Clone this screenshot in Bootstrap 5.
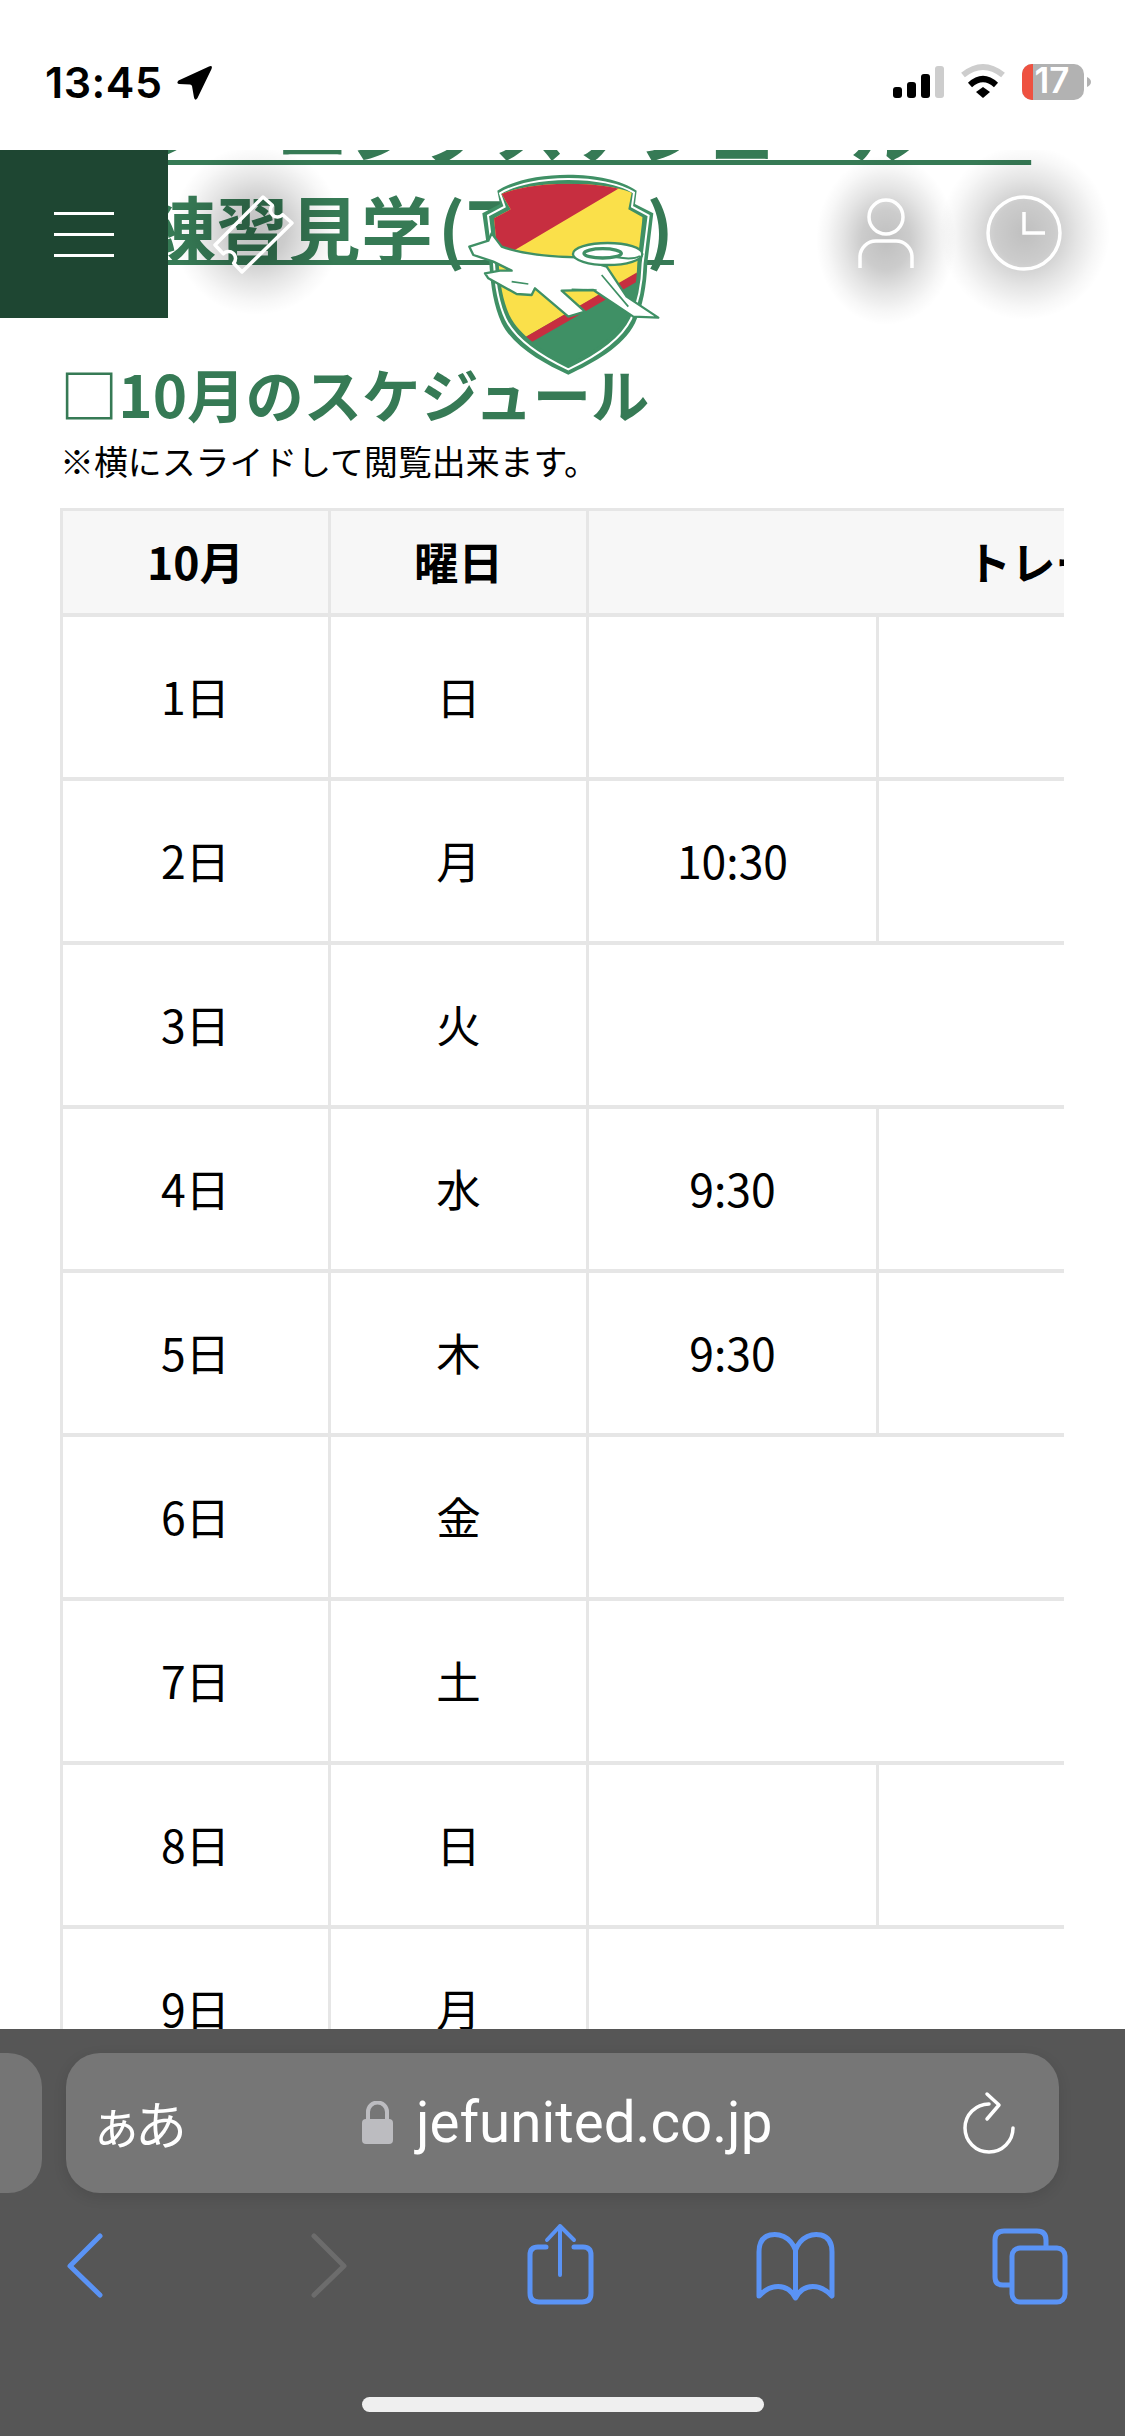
<!DOCTYPE html>
<html lang="ja">
<head>
  <meta charset="UTF-8" />
  <meta name="viewport" content="width=device-width, initial-scale=1.0"/>
  <title>練習見学</title>
  <link href="https://cdn.jsdelivr.net/npm/bootstrap@5.3.0/dist/css/bootstrap.min.css" rel="stylesheet">
  <style>
    body {
      font-family: "Noto Sans CJK JP", sans-serif;
      background-color: #fff;
      color: #000;
    }

    .phone-status {
      height: 150px;
      background-color: #fff;
      padding: 0 33px 0 45px;
      position: relative;
      z-index: 5;
    }

    .clock-time {
      font-family: "Inter", sans-serif;
      font-size: 43px;
      font-weight: 600;
      line-height: 1;
      margin-top: 61px;
      letter-spacing: .5px;
    }

    .page-scroll {
      min-height: 0;
    }

    .page-title {
      margin: -74px 0 0 60px;
      font-size: 72px;
      line-height: 100px;
      font-weight: 700;
      white-space: nowrap;
      letter-spacing: .3px;
    }

    .page-title a {
      color: #367a55;
      text-decoration: underline;
      text-decoration-thickness: 5px;
      text-underline-offset: 3px;
      text-decoration-skip-ink: none;
    }

    .title-second {
      margin-left: 84px;
    }

    .month-heading {
      margin: 76px 0 0 60px;
      font-size: 58.3px;
      line-height: 82px;
      font-weight: 700;
      color: #367a55;
    }

    .slide-note {
      margin: 4px 0 24px 60px;
      font-size: 33.9px;
      line-height: 46px;
    }

    .sched-wrap {
      margin-left: 60px;
      width: 1004px;
      overflow: hidden;
    }

    .sched-table {
      --bs-table-color: #000;
      width: 1551px;
      table-layout: fixed;
      border-collapse: collapse;
      margin: 0;
      font-size: 44.5px;
    }

    .sched-table th,
    .sched-table td {
      border: 3px solid #e6e6e6;
      border-bottom-width: 4px;
      padding: 0;
      height: 164px;
      text-align: center;
      vertical-align: middle;
      font-weight: 400;
      color: #000;
    }

    .sched-table thead th {
      height: 105px;
      background-color: #f7f7f7;
      font-weight: 700;
    }

    .menu-btn {
      top: 0;
      left: 0;
      width: 168px;
      height: 168px;
      background-color: #1e4632;
      border: 0;
      border-radius: 0;
      gap: 18px;
    }

    .menu-btn span {
      width: 60px;
      height: 3px;
      background-color: #fff;
    }

    .head-glow {
      background: radial-gradient(closest-side, rgba(0,0,0,.25), rgba(0,0,0,.2) 35%, rgba(0,0,0,.1) 62%, rgba(0,0,0,.03) 85%, rgba(0,0,0,0) 100%);
    }

    .glow-ticket { left: 172px; top: -5px; width: 170px; height: 170px; }
    .glow-person { left: 816px; top: 5px; width: 140px; height: 170px; }
    .glow-clock { left: 940px; top: -5px; width: 170px; height: 175px; }

    .head-icons {
      top: 0;
      left: 0;
    }

    .safari-bar {
      height: 407px;
      background-color: #565656;
      padding-top: 24px;
      position: relative;
      z-index: 5;
    }

    .url-row {
      gap: 24px;
    }

    .tab-peek {
      width: 42px;
      height: 140px;
      background-color: #757575;
      border-radius: 0 34px 34px 0;
    }

    .url-pill {
      width: 993px;
      height: 140px;
      background-color: #767676;
      border-radius: 34px;
      padding: 0 44px 0 34px;
      color: #fff;
      box-shadow: 0 4px 14px rgba(0,0,0,.1);
    }

    .aa-label {
      font-size: 52px;
      width: 83px;
      line-height: 1;
      white-space: nowrap;
      letter-spacing: -7px;
      text-indent: -10px;
    }

    .url-center {
      margin-left: 179px;
      gap: 22px;
    }

    .url-text {
      font-family: "Roboto", sans-serif;
      font-size: 56.5px;
      line-height: 1;
      white-space: nowrap;
    }

    .tool-icons {
      display: grid;
      grid-template-columns: 244px 217px 227px 236px auto;
      margin: 29px 0 0 64px;
    }

    .tool-icons svg {
      display: block;
      height: 84px;
      fill: none;
      stroke-linecap: round;
      stroke-linejoin: round;
      stroke-width: 5;
      stroke: #5a93f5;
    }

    .home-line {
      width: 402px;
      height: 15px;
      background-color: #efefef;
      border-radius: 8px;
      margin: 91px auto 0;
    }
  </style>
</head>
<body>

<div class="d-flex flex-column vh-100 overflow-hidden position-relative">

  <!-- status bar -->
  <div class="phone-status flex-shrink-0 d-flex justify-content-between align-items-start">
    <div class="d-flex align-items-start">
      <div class="clock-time">13:45</div>
      <svg width="40" height="40" viewBox="175 63 40 40" style="margin:63px 0 0 13px">
        <path d="M178.5 80.5 L209 66.5 Q213 65 211.5 69 L197.5 98 Q195 101.5 194 97.5 L192 86 Q191.5 84.5 190 84.5 L179 84 Q176 83 178.5 80.5Z" fill="#000"/>
      </svg>
    </div>
    <svg width="200" height="45" viewBox="892 60 200 45" style="margin-top:60px">
      <rect x="893" y="87" width="9" height="11" rx="3" fill="#000"/>
      <rect x="907" y="82" width="9" height="16" rx="3" fill="#000"/>
      <rect x="921" y="74" width="9" height="24" rx="3" fill="#000"/>
      <rect x="935" y="66" width="9" height="32" rx="3" fill="#cdcdcd"/>
      <path d="M963 75 Q983 59 1003 75" fill="none" stroke="#cdcdcd" stroke-width="6"/>
      <path d="M970 85 Q983 73 996 85" fill="none" stroke="#000" stroke-width="6"/>
      <path d="M976 92 L983 87 L990 92 L983 98Z" fill="#000"/>
      <rect x="1022" y="64" width="62" height="36" rx="10" fill="#b2b2b2"/>
      <path d="M1033 64 H1032 A10 10 0 0 0 1022 74 V90 A10 10 0 0 0 1032 100 H1033Z" fill="#ee5140"/>
      <path d="M1087 77 Q1091 79 1091 82 Q1091 85 1087 87Z" fill="#b2b2b2"/>
      <text x="1052" y="93" font-family="Inter, sans-serif" font-size="35" font-weight="600" fill="#fff" text-anchor="middle">17</text>
    </svg>
  </div>

  <!-- page content -->
  <div class="page-scroll flex-grow-1 overflow-hidden position-relative">
    <h1 class="page-title"><a href="#">トレーニングスケジュール・&ensp;<br><span class="title-second">練習見学&#8202;(下部&ensp;)</span></a></h1>
    <h2 class="month-heading">□10月のスケジュール</h2>
    <p class="slide-note">※横にスライドして閲覧出来ます。</p>

    <div class="sched-wrap">
      <table class="table sched-table">
        <colgroup>
          <col style="width:268px"><col style="width:258px"><col style="width:290px"><col style="width:290px"><col style="width:445px">
        </colgroup>
        <thead>
          <tr><th>10月</th><th>曜日</th><th colspan="3">トレーニング</th></tr>
        </thead>
        <tbody>
          <tr><td>1日</td><td>日</td><td></td><td></td><td></td></tr>
          <tr><td>2日</td><td>月</td><td>10:30</td><td></td><td></td></tr>
          <tr><td>3日</td><td>火</td><td colspan="3"></td></tr>
          <tr><td>4日</td><td>水</td><td>9:30</td><td></td><td></td></tr>
          <tr><td>5日</td><td>木</td><td>9:30</td><td></td><td></td></tr>
          <tr><td>6日</td><td>金</td><td colspan="3"></td></tr>
          <tr><td>7日</td><td>土</td><td colspan="3"></td></tr>
          <tr><td>8日</td><td>日</td><td></td><td></td><td></td></tr>
          <tr><td>9日</td><td>月</td><td colspan="3"></td></tr>
        </tbody>
      </table>
    </div>

    <!-- site header, floating over the page -->
    <button class="menu-btn btn position-absolute d-flex flex-column align-items-center justify-content-center p-0" aria-label="menu">
      <span></span><span></span><span></span>
    </button>

    <div class="head-glow glow-ticket position-absolute"></div>
    <div class="head-glow glow-person position-absolute"></div>
    <div class="head-glow glow-clock position-absolute"></div>

    <svg class="head-icons position-absolute" width="1125" height="240" viewBox="0 150 1125 240" fill="none" stroke="#fff" stroke-width="3.5">
      <!-- ticket -->
      <path d="M263 197 L272.3 205.3 A7 7 0 0 0 282.7 214.7 L292 223 L242 272 L233.7 263.2 A7 7 0 0 0 223.3 253.8 L215 245Z" stroke-linejoin="round"/>
      <!-- person -->
      <circle cx="886" cy="217" r="17"/>
      <path d="M860 268 V257 A16 16 0 0 1 876 241 H896 A16 16 0 0 1 912 257 V268"/>
      <!-- clock -->
      <circle cx="1024" cy="233" r="36"/>
      <path d="M1024 212 V233 H1045"/>

      <!-- logo -->
      <g transform="translate(420 150) scale(.3333)" stroke="none">
        <defs>
          <clipPath id="shieldInner">
            <path d="M245 132 C340 92 545 92 635 128 L625 178 L668 202 L652 340 C650 400 642 450 622 495 C590 560 510 610 445 642 C380 610 300 560 268 495 C248 450 240 400 236 340 L222 205 L272 178Z"/>
          </clipPath>
        </defs>
        <path d="M232 122 C330 58 560 58 650 122 L645 162 L700 190 L682 340 C680 410 668 470 645 520 C610 590 520 640 445 674 C370 640 280 590 245 520 C222 470 212 410 208 340 L187 190 L240 162Z" fill="#3f9065"/>
        <path d="M240 130 C335 73 555 73 642 128 L636 170 L686 197 L668 340 C666 405 655 460 633 507 C600 575 515 625 445 658 C375 625 290 575 257 507 C235 460 226 405 222 340 L204 197 L254 170Z" fill="none" stroke="#fff" stroke-width="6"/>
        <g clip-path="url(#shieldInner)">
          <rect x="180" y="60" width="540" height="620" fill="#3f9065"/>
          <path d="M180 60 H720 V330 L305 568 L180 640Z" fill="#fae04a"/>
          <path d="M180 60 H690 L310 285 L180 362Z" fill="#c72e40"/>
          <path d="M660 362 L660 390 L325 582 L305 568Z" fill="#c72e40"/>
        </g>
        <!-- jumping dog -->
        <path d="M148 290 L205 272 L215 250 L245 290 C300 310 380 320 470 322 L560 350 L620 440 L715 503 L640 500 L520 420 L425 422 L495 485 L445 500 L345 415 L335 435 L290 432 L205 385 L195 370 L240 362 L275 362 L220 335 L160 315Z" fill="#fff" stroke="#3f9065" stroke-width="7" stroke-linejoin="round"/>
        <path d="M275 395 L325 402 M545 375 L625 470 M455 418 L530 420" fill="none" stroke="#3f9065" stroke-width="5"/>
        <ellipse cx="563" cy="312" rx="104" ry="33" fill="#fff" stroke="#3f9065" stroke-width="7"/>
        <ellipse cx="548" cy="310" rx="56" ry="14" fill="none" stroke="#3f9065" stroke-width="10"/>
        <path d="M590 322 Q640 330 660 318" fill="none" stroke="#3f9065" stroke-width="6"/>
      </g>
    </svg>
  </div>

  <!-- safari toolbar -->
  <div class="safari-bar flex-shrink-0">
    <div class="url-row d-flex">
      <div class="tab-peek"></div>
      <div class="url-pill d-flex align-items-center">
        <div class="aa-label">ぁあ</div>
        <div class="url-center d-flex align-items-center me-auto">
          <svg width="32" height="44" viewBox="362 2102 32 44">
            <path d="M368 2122 V2113 A9.5 9.5 0 0 1 387 2113 V2122" fill="none" stroke="#bcbcc0" stroke-width="4"/>
            <rect x="362" y="2120" width="31" height="25" rx="4" fill="#bcbcc0"/>
          </svg>
          <span class="url-text">jefunited.co.jp</span>
        </div>
        <svg width="52" height="64" viewBox="964 2088 52 64" fill="none" stroke="#fff" stroke-width="3.5" stroke-linecap="round" stroke-linejoin="round">
          <path d="M990 2101 A24 24 0 1 0 1014 2125"/>
          <path d="M988 2091 L1000 2102 L988 2116"/>
        </svg>
      </div>
    </div>

    <div class="tool-icons">
      <svg width="42" viewBox="64 2222 42 84"><path d="M100 2236 L70 2266 L100 2295"/></svg>
      <svg width="42" viewBox="308 2222 42 84"><path d="M314 2236 L344 2266 L314 2295" stroke="#6c6c6c"/></svg>
      <svg width="71" viewBox="525 2222 71 84">
        <path d="M546 2247 H538 Q530 2247 530 2255 V2293 Q530 2302 539 2302 H582 Q591 2302 591 2293 V2255 Q591 2247 583 2247 H574"/>
        <path d="M560 2275 V2226 M547 2240 L560 2226 L574 2240" stroke-width="4"/>
      </svg>
      <svg width="87" viewBox="752 2222 87 84">
        <path d="M795.5 2250 C790 2236 778 2233 770 2235 C762 2237 759 2243 759 2252 V2296 C770 2284 787 2282 795.5 2298 C804 2282 821 2284 832 2296 V2252 C832 2243 829 2237 821 2235 C813 2233 801 2236 795.5 2250 V2296"/>
      </svg>
      <svg width="84" viewBox="988 2222 84 84">
        <path d="M1011 2285 H1003 Q995 2285 995 2277 V2240 Q995 2231 1004 2231 H1037 Q1046 2231 1046 2240 V2247"/>
        <rect x="1012" y="2248" width="53" height="54" rx="8"/>
      </svg>
    </div>
    <div class="home-line"></div>
  </div>
</div>

<script src="https://cdn.jsdelivr.net/npm/bootstrap@5.3.0/dist/js/bootstrap.bundle.min.js"></script>
</body>
</html>
